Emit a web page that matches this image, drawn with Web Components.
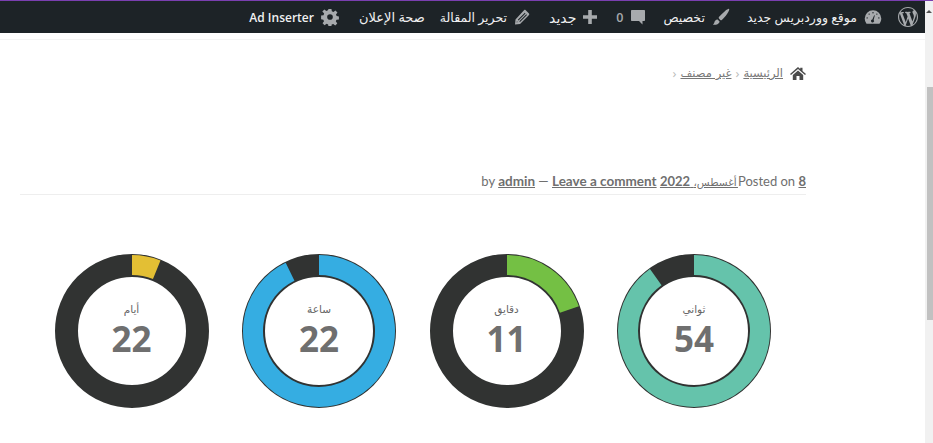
<!DOCTYPE html>
<html lang="ar" dir="rtl"><head><meta charset="utf-8"><title>Countdown</title>
<style>
html,body{margin:0;height:443px;overflow:hidden;background:#fff}
body{display:flex;flex-direction:column;font-family:"Open Sans","DejaVu Sans",sans-serif}
</style></head><body>
<purple-stripe></purple-stripe>
<page-shell>
  <site-scrollbar slot="scroll"></site-scrollbar>
  <admin-bar>
    <bar-item icon="wp" style="padding-right:7px"></bar-item>
    <bar-item icon="dash">موقع ووردبريس جديد</bar-item>
    <bar-item icon="brush" style="margin-right:1px">تخصيص</bar-item>
    <bar-item icon="comment" style="margin-right:1px"><b style="color:#a7aaad;font-weight:600;direction:ltr">0</b></bar-item>
    <bar-item icon="plus" style="margin-right:3px"><span style="font-size:14px">جديد</span></bar-item>
    <bar-item icon="pencil" style="margin-right:3px">تحرير المقالة</bar-item>
    <bar-item style="margin-right:-1px;font-size:13px">صحة الإعلان</bar-item>
    <bar-item icon="gear" style="margin-right:4px"><span style="font-weight:600;font-size:12px">Ad Inserter</span></bar-item>
  </admin-bar>
  <header-rule></header-rule>
  <post-header>
    <bread-crumbs></bread-crumbs>
    <post-meta></post-meta>
  </post-header>
  <count-down>
    <count-ring label="ثواني" value="54" color="#65c3ab" angle="324.6"></count-ring>
    <count-ring label="دقايق" value="11" color="#74c044" angle="71"></count-ring>
    <count-ring label="ساعة" value="22" color="#35ade2" angle="334"></count-ring>
    <count-ring label="أيام" value="22" color="#e3bf34" angle="22"></count-ring>
  </count-down>
</page-shell>
<script>
function def(name, html){
  customElements.define(name, class extends HTMLElement{
    constructor(){super();this.attachShadow({mode:'open'});}
    connectedCallback(){this.shadowRoot.innerHTML=typeof html==='function'?html(this):html;}
  });
}
const ICONS={
 wp:`<svg width="20" height="20" viewBox="0 0 20 20"><path fill="#a7aaad" d="M20 10c0-5.510-4.490-10-10-10C4.480 0 0 4.490 0 10c0 5.520 4.480 10 10 10 5.510 0 10-4.480 10-10zM7.780 15.370L4.370 6.220c.55-.02 1.170-.08 1.170-.08.5-.06.44-1.130-.06-1.110 0 0-1.450.11-2.370.11-.18 0-.37 0-.58-.01C4.120 2.690 6.870 1.110 10 1.110c2.330 0 4.450.87 6.050 2.340-.68-.11-1.650.39-1.650 1.580 0 .74.45 1.360.9 2.100.35.610.55 1.360.55 2.460 0 1.490-1.400 5-1.400 5l-3.030-8.370c.54-.02.82-.17.82-.17.5-.05.44-1.250-.06-1.220 0 0-1.440.12-2.380.12-.87 0-2.330-.12-2.330-.12-.5-.03-.56 1.200-.06 1.220l.92.080 1.260 3.410zM17.410 10c.24-.64.74-1.870.43-4.250.7 1.290 1.050 2.710 1.050 4.250 0 3.290-1.730 6.240-4.400 7.780.97-2.590 1.940-5.200 2.920-7.780zM6.100 18.090C3.120 16.650 1.110 13.530 1.110 10c0-1.300.23-2.480.72-3.590C3.250 10.300 4.670 14.200 6.100 18.090zm4.030-6.630l2.580 6.980c-.86.29-1.760.45-2.710.45-.79 0-1.570-.11-2.300-.33.81-2.380 1.630-4.740 2.430-7.100z"/></svg>`,
 dash:`<svg width="18" height="18" viewBox="0 0 20 20"><path fill="#a7aaad" fill-rule="evenodd" d="M10 2.500a9.200 9.200 0 0 1 9.200 9.200c0 2.200-.8 4.200-2 5.800H2.800a9.100 9.100 0 0 1-2-5.800A9.200 9.200 0 0 1 10 2.500zM10 4.500a.8.8 0 1 0 0 1.600.8.8 0 0 0 0-1.600zM5.700 6a.8.8 0 1 0 0 1.600.8.8 0 0 0 0-1.600zM14.300 6a.8.8 0 1 0 0 1.600.8.8 0 0 0 0-1.600zM3.500 10.200a.8.8 0 1 0 0 1.600.8.8 0 0 0 0-1.600zM16.500 10.200a.8.8 0 1 0 0 1.600.8.8 0 0 0 0-1.600zM11.300 8l-2 4.700a1.700 1.700 0 1 0 1.400.5l1.300-5z"/></svg>`,
 brush:`<svg width="18" height="18" viewBox="0 0 20 20"><path fill="#a7aaad" d="M19 1c.6.500-.4 3-2.300 5.700-1.700 2.500-4 5.200-5.800 6.500-.6.400-1.200.4-1.700 0l-1.500-1.500c-.4-.5-.4-1.100 0-1.700C9.200 8.300 11.900 5.600 14.300 3.500c2.200-1.800 4.200-2.900 4.700-2.500zM6.500 13l1.700 1.600c.3.300.3.700.1 1.100-.9 2.100-3.600 3.100-7.300 2.800.9-.7 1.500-1.500 1.700-2.600.2-1.400 1.600-2.800 3.300-3 .2 0 .4 0 .5.100z"/></svg>`,
 comment:`<svg width="16" height="16" viewBox="0 0 16 16"><path fill="#a7aaad" d="M2 1h12c.6 0 1 .4 1 1v9c0 .6-.4 1-1 1h-1.500v3.500L9 12H2c-.6 0-1-.4-1-1V2c0-.6.4-1 1-1z"/></svg>`,
 plus:`<svg width="14" height="14" viewBox="0 0 14 14"><path fill="#a7aaad" d="M5.200 0h3.600v5.200H14v3.600H8.800V14H5.200V8.800H0V5.200h5.200z"/></svg>`,
 pencil:`<svg width="16" height="16" viewBox="0 0 16 16"><path fill="#a7aaad" fill-rule="evenodd" d="M11.500 1l3.500 3.500c.4.400.4 1 0 1.400L6 15l-5 .5.500-5L10.200 1c.4-.4.900-.4 1.300 0zM10.800 3.700L3.800 10.700l.7.7 7-7zM12.300 5.200l-7 7 .7.700 7-7zM2.900 12.200l-.3 1.200 1.200-.3z"/></svg>`,
 gear:`<svg width="18" height="18" viewBox="0 0 20 20"><path fill="#a7aaad" fill-rule="evenodd" d="M8.200 0h3.600l.5 3 1.900.8 2.500-1.800 2.500 2.500-1.800 2.500.8 1.900 2.800.5v3.600l-3 .5-.8 1.900 1.800 2.500-2.500 2.500-2.500-1.800-1.900.8-.5 2.800H8.200l-.5-3-1.900-.8-2.500 1.800-2.500-2.500 1.800-2.500-.8-1.900-2.800-.5V8.200l3-.5.800-1.900L.5 3.300 3 .8l2.500 1.800 1.900-.8zM10 6.500a3.500 3.500 0 1 0 0 7 3.500 3.500 0 0 0 0-7z" transform="translate(1 1) scale(.9)"/></svg>`
};
def('purple-stripe',`<style>:host{display:block;height:1px;background:#7a3fb0;flex:none}</style>`);
def('page-shell',`<style>:host{display:flex;flex:1;min-height:0;direction:ltr}
 .main{flex:1;min-width:0;direction:rtl;display:flex;flex-direction:column;order:1}
 .s{order:2;display:flex}
</style><div class="s"><slot name="scroll"></slot></div><div class="main"><slot></slot></div>`);
def('site-scrollbar',`<style>:host{display:flex;flex-direction:column;width:8px;background:#f1f1f1;align-items:flex-end}
 .a{height:86px;width:100%}
 .a:before{content:"";display:block;margin:9px 0 0 1px;width:0;height:0;border:3px solid transparent;border-top:0;border-bottom:3px solid #505050}
 .t{height:233px;width:6px;background:#c1c1c1}</style><div class="a"></div><div class="t"></div>`);
def('admin-bar',`<style>:host{display:flex;height:32px;background:#1d2327;color:#f0f0f1;font-size:12.500px;align-items:center;flex:none;box-sizing:border-box}</style><slot></slot>`);
def('bar-item',h=>{const i=h.getAttribute('icon');return `<style>:host{display:flex;align-items:center;height:100%;gap:7px;padding:0 8px;white-space:nowrap}svg{display:block;flex:none}</style>${i?ICONS[i]:''}<slot></slot>`});
def('header-rule',`<style>:host{display:block;height:1px;margin-top:6px;background:#f4f4f4;flex:none}</style>`);
def('post-header',`<style>:host{display:block;margin:0 119px 0 0;font-size:13px;color:#777}</style><slot></slot>`);
def('bread-crumbs',`<style>:host{display:flex;align-items:center;gap:4px;height:16px;margin-top:25px;font:11.500px "DejaVu Sans",sans-serif;color:#777}
 a{color:#777;text-decoration:underline}svg{display:block;margin-left:3px}i{font:normal 13px "Open Sans";color:#bbb}</style>
 <svg width="16" height="13" viewBox="0 0 16 13"><path fill="#4a4a4a" d="M8 0l2.200 1.900V.7h2.300v3.200L16 7l-1 1.100L8 2 1 8.100 0 7zM2.800 8L8 3.500 13.200 8v5H9.500V9h-3v4H2.800z"/></svg>
 <a>الرئيسية</a><i>‹</i><a>غير مصنف</a><i>‹</i>`);
def('post-meta',`<style>:host{display:block;margin-top:88px;height:25px;border-bottom:1px solid #eee;margin-left:20px;font:13px/25px Lato,"DejaVu Sans",sans-serif;color:#6f6f6f;white-space:nowrap}
 a{color:#6f6f6f;text-decoration:underline}b{font-weight:700}bdi{unicode-bidi:isolate}.ar{font-size:10.500px;margin-right:-2px}.x{font-size:13.500px}</style>
 Posted on <a><b>8</b> <span class="ar">أغسطس،</span> <b>2022</b></a> <bdi><a><b class="x">Leave a comment</b></a></bdi> — <bdi>by <a><b class="x">admin</b></a></bdi>`);
def('count-down',`<style>:host{display:flex;gap:33.500px;margin:59px 154px 0 0}</style><slot></slot>`);
def('count-ring',h=>{
 const a=+h.getAttribute('angle'),c=h.getAttribute('color'),r=66,t=a*Math.PI/180;
 const x=77+r*Math.sin(t),y=77-r*Math.cos(t),l=a>180?1:0;
 return `<style>:host{display:block;width:154px;height:154px;position:relative;flex:none}
 svg{display:block}
 .c{position:absolute;inset:0;display:flex;flex-direction:column;align-items:center;color:#6f6f6f}
 .l{font:10.500px/12px "DejaVu Sans",sans-serif;margin-top:49px;color:#666}
 .v{font:700 35px/30px "Open Sans",sans-serif;margin-top:9px;direction:ltr}</style>
 <svg width="154" height="154" viewBox="0 0 154 154"><circle cx="77" cy="77" r="65.500" fill="none" stroke="#313332" stroke-width="23"/>
 <path d="M77 11A66 66 0 ${l} 1 ${x.toFixed(2)} ${y.toFixed(2)}" fill="none" stroke="${c}" stroke-width="20"/></svg>
 <div class="c"><div class="l">${h.getAttribute('label')}</div><div class="v">${h.getAttribute('value')}</div></div>`});
</script>
</body></html>
